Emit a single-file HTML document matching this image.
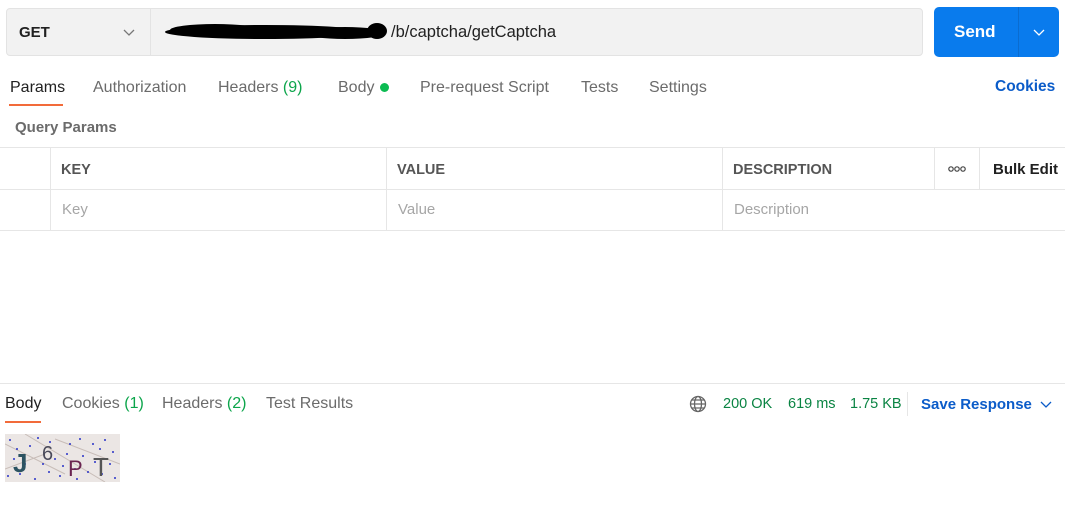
<!DOCTYPE html>
<html><head><meta charset="utf-8"><style>
*{margin:0;padding:0;box-sizing:border-box}
body{width:1065px;height:531px;background:#fff;font-family:"Liberation Sans",sans-serif;position:relative;overflow:hidden;color:#212121}
.a{position:absolute;white-space:nowrap}
.tab{font-size:16px;color:#6b6b6b;top:79px}
.th{font-size:14.5px;font-weight:bold;color:#555;top:162px}
.ph{font-size:15px;color:#a6a6a6;top:201px}
.vl{position:absolute;width:1px;background:#e6e6e6}
.hl{position:absolute;height:1px;background:#e6e6e6;left:0;width:1065px}
.g{color:#0ca54b}
</style></head><body>
<div class="a" style="left:6px;top:8px;width:917px;height:48px;background:#f2f2f2;border:1px solid #e3e3e3;border-radius:4px"></div>
<div class="vl" style="left:150px;top:9px;height:46px;background:#e3e3e3"></div>
<div class="a" style="left:19px;top:24px;font-size:15px;font-weight:bold;color:#212121">GET</div>
<svg class="a" style="left:123px;top:29px" width="12" height="8"><path d="M1 1l5 5 5-5" stroke="#777" fill="none" stroke-width="1.3"/></svg>
<svg class="a" style="left:155px;top:17px" width="240" height="30"><ellipse cx="110" cy="15" rx="100" ry="7" fill="#000"/><ellipse cx="60" cy="13" rx="45" ry="6" fill="#000"/><ellipse cx="190" cy="16" rx="40" ry="6" fill="#000"/><ellipse cx="222" cy="14" rx="10" ry="8" fill="#000"/></svg>
<div class="a" style="left:391px;top:23px;font-size:16.5px;color:#212121">/b/captcha/getCaptcha</div>
<div class="a" style="left:934px;top:7px;width:125px;height:50px;background:#097bed;border-radius:5px"></div>
<div class="vl" style="left:1018px;top:7px;height:50px;background:#0a6cd0"></div>
<div class="a" style="left:954px;top:22px;font-size:17px;font-weight:bold;color:#fff">Send</div>
<svg class="a" style="left:1033px;top:29px" width="12" height="8"><path d="M1 1l5 5 5-5" stroke="#fff" fill="none" stroke-width="1.3"/></svg>

<div class="a tab" style="left:10px;color:#212121">Params</div>
<div class="a" style="left:9px;top:104px;width:54px;height:2px;background:#f26b3a"></div>
<div class="a tab" style="left:93px">Authorization</div>
<div class="a tab" style="left:218px">Headers <span class="g">(9)</span></div>
<div class="a tab" style="left:338px">Body</div>
<div class="a" style="left:380px;top:83px;width:9px;height:9px;border-radius:50%;background:#0cbb52"></div>
<div class="a tab" style="left:420px">Pre-request Script</div>
<div class="a tab" style="left:581px">Tests</div>
<div class="a tab" style="left:649px">Settings</div>
<div class="a" style="left:995px;top:78px;font-size:15.5px;font-weight:bold;color:#0b5cc9">Cookies</div>
<div class="a" style="left:15px;top:119px;font-size:15px;font-weight:bold;color:#6b6b6b">Query Params</div>

<div class="hl" style="top:147px"></div>
<div class="hl" style="top:189px"></div>
<div class="hl" style="top:230px"></div>
<div class="vl" style="left:50px;top:147px;height:84px"></div>
<div class="vl" style="left:386px;top:147px;height:84px"></div>
<div class="vl" style="left:722px;top:147px;height:84px"></div>
<div class="vl" style="left:934px;top:147px;height:42px"></div>
<div class="vl" style="left:979px;top:147px;height:42px"></div>
<div class="a th" style="left:61px">KEY</div>
<div class="a th" style="left:397px">VALUE</div>
<div class="a th" style="left:733px">DESCRIPTION</div>
<svg class="a" style="left:948px;top:165px" width="20" height="8" fill="none" stroke="#444" stroke-width="1.2"><circle cx="3" cy="4" r="2.2"/><circle cx="9" cy="4" r="2.2"/><circle cx="15" cy="4" r="2.2"/></svg>
<div class="a" style="left:993px;top:161px;font-size:15px;font-weight:bold;color:#212121">Bulk Edit</div>
<div class="a ph" style="left:62px">Key</div>
<div class="a ph" style="left:398px">Value</div>
<div class="a ph" style="left:734px">Description</div>

<div class="hl" style="top:383px"></div>
<div class="a tab" style="left:5px;top:395px;color:#212121">Body</div>
<div class="a" style="left:5px;top:421px;width:36px;height:2px;background:#f26b3a"></div>
<div class="a tab" style="left:62px;top:395px">Cookies <span class="g">(1)</span></div>
<div class="a tab" style="left:162px;top:395px">Headers <span class="g">(2)</span></div>
<div class="a tab" style="left:266px;top:395px">Test Results</div>
<svg class="a" style="left:689px;top:395px" width="18" height="18" fill="none" stroke="#666" stroke-width="1.3"><circle cx="9" cy="9" r="7.5"/><ellipse cx="9" cy="9" rx="3.5" ry="7.5"/><path d="M1.5 9h15M3 5h12M3 13h12"/></svg>
<div class="a" style="left:723px;top:396px;font-size:14.5px;color:#0a8443">200 OK</div>
<div class="a" style="left:788px;top:396px;font-size:14.5px;color:#0a8443">619 ms</div>
<div class="a" style="left:850px;top:396px;font-size:14.5px;color:#0a8443">1.75 KB</div>
<div class="vl" style="left:907px;top:392px;height:24px"></div>
<div class="a" style="left:921px;top:396px;font-size:15px;font-weight:bold;color:#0b5cc9">Save Response</div>
<svg class="a" style="left:1040px;top:401px" width="12" height="8"><path d="M1 1l5 5 5-5" stroke="#0b5cc9" fill="none" stroke-width="1.3"/></svg>

<svg class="a" style="left:5px;top:434px" width="115" height="48">
<rect width="115" height="48" fill="#ebe6e4"/>
<path d="M0 10L60 40M20 0L100 48M50 5L115 30M0 35L40 20" stroke="#c8bdb8" stroke-width="1"/>
<g fill="#2a33c8">
<circle cx="5" cy="6" r="1"/><circle cx="15" cy="40" r="1"/><circle cx="25" cy="12" r="1"/><circle cx="38" cy="30" r="1"/><circle cx="45" cy="8" r="1"/><circle cx="55" cy="42" r="1"/><circle cx="62" cy="20" r="1"/><circle cx="75" cy="5" r="1"/><circle cx="83" cy="38" r="1"/><circle cx="95" cy="15" r="1"/><circle cx="105" cy="30" r="1"/><circle cx="110" cy="44" r="1"/><circle cx="9" cy="25" r="1"/><circle cx="30" cy="45" r="1"/><circle cx="50" cy="25" r="1"/><circle cx="70" cy="35" r="1"/><circle cx="90" cy="28" r="1"/><circle cx="100" cy="6" r="1"/><circle cx="20" cy="30" r="1"/><circle cx="65" cy="10" r="1"/>
<circle cx="12" cy="15" r="1"/><circle cx="33" cy="4" r="1"/><circle cx="58" cy="32" r="1"/><circle cx="78" cy="22" r="1"/><circle cx="88" cy="10" r="1"/><circle cx="108" cy="18" r="1"/><circle cx="3" cy="42" r="1"/><circle cx="44" cy="38" r="1"/><circle cx="97" cy="40" r="1"/><circle cx="72" cy="45" r="1"/>
</g>
<text x="8" y="38" font-family="Liberation Sans" font-size="26" font-weight="bold" fill="#2c5361">J</text>
<text x="37" y="26" font-family="Liberation Sans" font-size="20" fill="#4a4a5a">6</text>
<text x="63" y="42" font-family="Liberation Sans" font-size="22" fill="#6a2450">P</text>
<text x="88" y="42" font-family="Liberation Sans" font-size="26" fill="#555">T</text>
</svg>
</body></html>
